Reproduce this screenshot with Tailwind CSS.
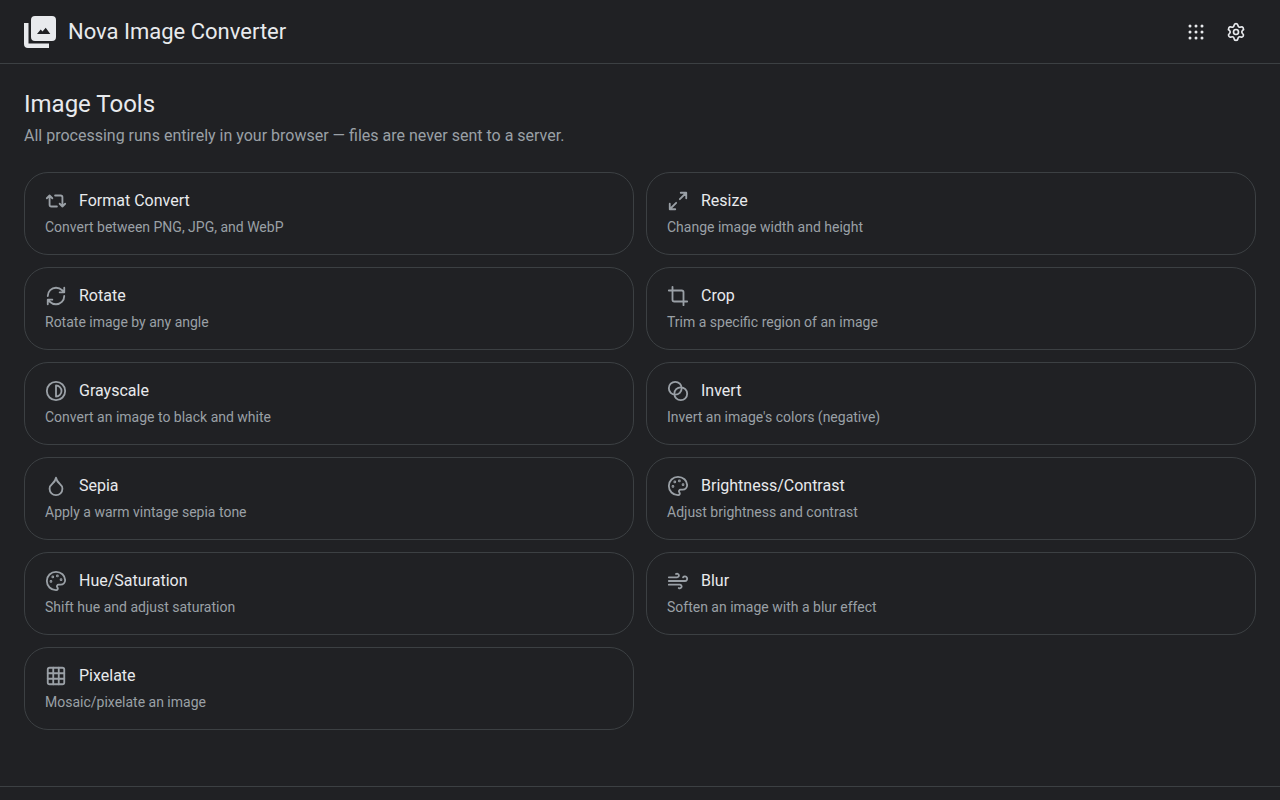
<!DOCTYPE html>
<html lang="en">
<head>
<meta charset="utf-8">
<meta name="viewport" content="width=device-width, initial-scale=1">
<title>Nova Image Converter</title>
<script src="https://cdn.jsdelivr.net/npm/@tailwindcss/browser@4"></script>
</head>
<body class="flex h-screen flex-col overflow-x-hidden bg-[#202124] font-[Roboto,sans-serif] text-[#e8eaed]">
<header class="flex h-16 shrink-0 items-center justify-between border-b border-[#3c4043] px-6">
  <a href="#" class="flex items-center gap-3">
    <svg class="size-8" viewBox="0 0 32 32" fill="#e8eaed" aria-hidden="true">
      <path d="M0 7h4.500v20.500H25V32H4a4 4 0 0 1-4-4z"/>
      <path fill-rule="evenodd" d="M11 0h17a4 4 0 0 1 4 4v17a4 4 0 0 1-4 4H11a4 4 0 0 1-4-4V4a4 4 0 0 1 4-4zM13 18h13.300l-4.600-6.300-3.200 3.800-1.800-2z"/>
    </svg>
    <span class="text-[22px] leading-7">Nova Image Converter</span>
  </a>
  <nav class="flex">
    <button type="button" aria-label="Apps" class="flex size-10 items-center justify-center rounded-full">
      <svg class="size-5" viewBox="0 0 20 20" fill="#e8eaed"><circle cx="4" cy="4" r="1.500"/><circle cx="10" cy="4" r="1.500"/><circle cx="16" cy="4" r="1.500"/><circle cx="4" cy="10" r="1.500"/><circle cx="10" cy="10" r="1.500"/><circle cx="16" cy="10" r="1.500"/><circle cx="4" cy="16" r="1.500"/><circle cx="10" cy="16" r="1.500"/><circle cx="16" cy="16" r="1.500"/></svg>
    </button>
    <button type="button" aria-label="Settings" class="flex size-10 items-center justify-center rounded-full">
      <svg class="size-5" viewBox="0 0 24 24" fill="none" stroke="#e8eaed" stroke-width="2" stroke-linecap="round" stroke-linejoin="round"><path d="M9.671 4.136a2.340 2.340 0 0 1 4.659 0 2.340 2.340 0 0 0 3.319 1.915 2.340 2.340 0 0 1 2.330 4.033 2.340 2.340 0 0 0 0 3.831 2.340 2.340 0 0 1-2.330 4.033 2.340 2.340 0 0 0-3.319 1.915 2.340 2.340 0 0 1-4.659 0 2.340 2.340 0 0 0-3.320-1.915 2.340 2.340 0 0 1-2.330-4.033 2.340 2.340 0 0 0 0-3.831A2.340 2.340 0 0 1 6.350 6.051a2.340 2.340 0 0 0 3.319-1.915"/><circle cx="12" cy="12" r="3"/></svg>
    </button>
  </nav>
</header>
<main class="shrink-0 px-6 pt-6 pb-14">
  <h1 class="text-2xl">Image Tools</h1>
  <p class="mt-1 text-base leading-6 text-[#9aa0a6]">All processing runs entirely in your browser — files are never sent to a server.</p>
  <div class="mt-6 grid grid-cols-2 gap-3">
    <a href="#" class="rounded-3xl border border-[#3c4043] px-5 py-4">
      <div class="flex items-center gap-3">
        <svg class="size-[22px] text-[#9aa0a6]" viewBox="0 0 24 24" fill="none" stroke="currentColor" stroke-width="2" stroke-linecap="round" stroke-linejoin="round"><path d="m2 9 3-3 3 3M13 18H7a2 2 0 0 1-2-2V6M22 15l-3 3-3-3M11 6h6a2 2 0 0 1 2 2v10"/></svg>
        <h2 class="text-base leading-6">Format Convert</h2>
      </div>
      <p class="mt-1 text-sm leading-[21px] text-[#9aa0a6]">Convert between PNG, JPG, and WebP</p>
    </a>
    <a href="#" class="rounded-3xl border border-[#3c4043] px-5 py-4">
      <div class="flex items-center gap-3">
        <svg class="size-[22px] text-[#9aa0a6]" viewBox="0 0 24 24" fill="none" stroke="currentColor" stroke-width="2" stroke-linecap="round" stroke-linejoin="round"><path d="M15 3h6v6M21 3l-7 7M3 21l7-7M9 21H3v-6"/></svg>
        <h2 class="text-base leading-6">Resize</h2>
      </div>
      <p class="mt-1 text-sm leading-[21px] text-[#9aa0a6]">Change image width and height</p>
    </a>
    <a href="#" class="rounded-3xl border border-[#3c4043] px-5 py-4">
      <div class="flex items-center gap-3">
        <svg class="size-[22px] text-[#9aa0a6]" viewBox="0 0 24 24" fill="none" stroke="currentColor" stroke-width="2" stroke-linecap="round" stroke-linejoin="round"><path d="M3 12a9 9 0 0 1 9-9 9.750 9.750 0 0 1 6.740 2.740L21 8M21 3v5h-5M21 12a9 9 0 0 1-9 9 9.750 9.750 0 0 1-6.740-2.740L3 16M8 16H3v5"/></svg>
        <h2 class="text-base leading-6">Rotate</h2>
      </div>
      <p class="mt-1 text-sm leading-[21px] text-[#9aa0a6]">Rotate image by any angle</p>
    </a>
    <a href="#" class="rounded-3xl border border-[#3c4043] px-5 py-4">
      <div class="flex items-center gap-3">
        <svg class="size-[22px] text-[#9aa0a6]" viewBox="0 0 24 24" fill="none" stroke="currentColor" stroke-width="2" stroke-linecap="round" stroke-linejoin="round"><path d="M6 2v14a2 2 0 0 0 2 2h14M18 22V8a2 2 0 0 0-2-2H2"/></svg>
        <h2 class="text-base leading-6">Crop</h2>
      </div>
      <p class="mt-1 text-sm leading-[21px] text-[#9aa0a6]">Trim a specific region of an image</p>
    </a>
    <a href="#" class="rounded-3xl border border-[#3c4043] px-5 py-4">
      <div class="flex items-center gap-3">
        <svg class="size-[22px] text-[#9aa0a6]" viewBox="0 0 24 24" fill="none" stroke="currentColor" stroke-width="2" stroke-linecap="round" stroke-linejoin="round"><circle cx="12" cy="12" r="10"/><path d="M12 18a6 6 0 0 0 0-12v12z"/></svg>
        <h2 class="text-base leading-6">Grayscale</h2>
      </div>
      <p class="mt-1 text-sm leading-[21px] text-[#9aa0a6]">Convert an image to black and white</p>
    </a>
    <a href="#" class="rounded-3xl border border-[#3c4043] px-5 py-4">
      <div class="flex items-center gap-3">
        <svg class="size-[22px] text-[#9aa0a6]" viewBox="0 0 24 24" fill="none" stroke="currentColor" stroke-width="2" stroke-linecap="round" stroke-linejoin="round"><circle cx="9" cy="9" r="7"/><circle cx="15" cy="15" r="7"/></svg>
        <h2 class="text-base leading-6">Invert</h2>
      </div>
      <p class="mt-1 text-sm leading-[21px] text-[#9aa0a6]">Invert an image's colors (negative)</p>
    </a>
    <a href="#" class="rounded-3xl border border-[#3c4043] px-5 py-4">
      <div class="flex items-center gap-3">
        <svg class="size-[22px] text-[#9aa0a6]" viewBox="0 0 24 24" fill="none" stroke="currentColor" stroke-width="2" stroke-linecap="round" stroke-linejoin="round"><path d="M12 22a7 7 0 0 0 7-7c0-2-1-3.900-3-5.500s-3.500-4-4-6.500c-.5 2.500-2 4.900-4 6.500C6 11.100 5 13 5 15a7 7 0 0 0 7 7z"/></svg>
        <h2 class="text-base leading-6">Sepia</h2>
      </div>
      <p class="mt-1 text-sm leading-[21px] text-[#9aa0a6]">Apply a warm vintage sepia tone</p>
    </a>
    <a href="#" class="rounded-3xl border border-[#3c4043] px-5 py-4">
      <div class="flex items-center gap-3">
        <svg class="size-[22px] text-[#9aa0a6]" viewBox="0 0 24 24" fill="none" stroke="currentColor" stroke-width="2" stroke-linecap="round" stroke-linejoin="round"><path d="M12 22a1 1 0 0 1 0-20 10 9 0 0 1 10 9 5 5 0 0 1-5 5h-2.250a1.750 1.750 0 0 0-1.400 2.800l.3.400a1.750 1.750 0 0 1-1.400 2.800z"/><g fill="currentColor"><circle cx="13.500" cy="6.500" r=".5"/><circle cx="17.500" cy="10.500" r=".5"/><circle cx="6.500" cy="12.500" r=".5"/><circle cx="8.500" cy="7.500" r=".5"/></g></svg>
        <h2 class="text-base leading-6">Brightness/Contrast</h2>
      </div>
      <p class="mt-1 text-sm leading-[21px] text-[#9aa0a6]">Adjust brightness and contrast</p>
    </a>
    <a href="#" class="rounded-3xl border border-[#3c4043] px-5 py-4">
      <div class="flex items-center gap-3">
        <svg class="size-[22px] text-[#9aa0a6]" viewBox="0 0 24 24" fill="none" stroke="currentColor" stroke-width="2" stroke-linecap="round" stroke-linejoin="round"><path d="M12 22a1 1 0 0 1 0-20 10 9 0 0 1 10 9 5 5 0 0 1-5 5h-2.250a1.750 1.750 0 0 0-1.400 2.800l.3.400a1.750 1.750 0 0 1-1.400 2.800z"/><g fill="currentColor"><circle cx="13.500" cy="6.500" r=".5"/><circle cx="17.500" cy="10.500" r=".5"/><circle cx="6.500" cy="12.500" r=".5"/><circle cx="8.500" cy="7.500" r=".5"/></g></svg>
        <h2 class="text-base leading-6">Hue/Saturation</h2>
      </div>
      <p class="mt-1 text-sm leading-[21px] text-[#9aa0a6]">Shift hue and adjust saturation</p>
    </a>
    <a href="#" class="rounded-3xl border border-[#3c4043] px-5 py-4">
      <div class="flex items-center gap-3">
        <svg class="size-[22px] text-[#9aa0a6]" viewBox="0 0 24 24" fill="none" stroke="currentColor" stroke-width="2" stroke-linecap="round" stroke-linejoin="round"><path d="M12.800 19.600A2 2 0 1 0 14 16H2M17.500 8a2.500 2.500 0 1 1 2 4H2M9.800 4.400A2 2 0 1 1 11 8H2"/></svg>
        <h2 class="text-base leading-6">Blur</h2>
      </div>
      <p class="mt-1 text-sm leading-[21px] text-[#9aa0a6]">Soften an image with a blur effect</p>
    </a>
    <a href="#" class="rounded-3xl border border-[#3c4043] px-5 py-4">
      <div class="flex items-center gap-3">
        <svg class="size-[22px] text-[#9aa0a6]" viewBox="0 0 24 24" fill="none" stroke="currentColor" stroke-width="2" stroke-linecap="round" stroke-linejoin="round"><rect x="3" y="3" width="18" height="18" rx="2"/><path d="M3 9h18M3 15h18M9 3v18M15 3v18"/></svg>
        <h2 class="text-base leading-6">Pixelate</h2>
      </div>
      <p class="mt-1 text-sm leading-[21px] text-[#9aa0a6]">Mosaic/pixelate an image</p>
    </a>
  </div>
</main>
<footer class="grow border-t border-[#3c4043]"></footer>
</body>
</html>
